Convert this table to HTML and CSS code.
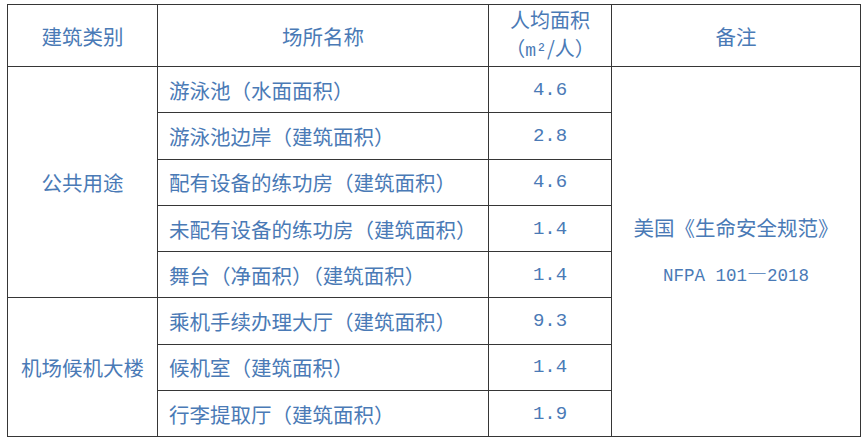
FILE: index.html
```html
<!DOCTYPE html>
<html lang="zh-CN">
<head>
<meta charset="utf-8">
<title>人均面积</title>
<link rel="stylesheet" href="styles.css">
</head>
<body>
<table class="area-table">
  <colgroup>
    <col class="c-type">
    <col class="c-name">
    <col class="c-val">
    <col class="c-note">
  </colgroup>
  <thead>
    <tr class="head-row">
      <th>建筑类别</th>
      <th>场所名称</th>
      <th class="two-line"><span class="hl">人均面积</span><span class="hl">（<span class="unit">m²</span>/人）</span></th>
      <th>备注</th>
    </tr>
  </thead>
  <tbody>
    <tr>
      <td rowspan="5" class="type">公共用途</td>
      <td class="name">游泳池（水面面积）</td>
      <td class="val">4.6</td>
      <td rowspan="8" class="note">美国《生命安全规范》<br><span class="code">NFPA 101<span class="dash">—</span>2018</span></td>
    </tr>
    <tr>
      <td class="name">游泳池边岸（建筑面积）</td>
      <td class="val">2.8</td>
    </tr>
    <tr>
      <td class="name">配有设备的练功房（建筑面积）</td>
      <td class="val">4.6</td>
    </tr>
    <tr>
      <td class="name">未配有设备的练功房（建筑面积）</td>
      <td class="val">1.4</td>
    </tr>
    <tr>
      <td class="name">舞台（净面积）（建筑面积）</td>
      <td class="val">1.4</td>
    </tr>
    <tr>
      <td rowspan="3" class="type">机场候机大楼</td>
      <td class="name">乘机手续办理大厅（建筑面积）</td>
      <td class="val">9.3</td>
    </tr>
    <tr>
      <td class="name">候机室（建筑面积）</td>
      <td class="val">1.4</td>
    </tr>
    <tr>
      <td class="name">行李提取厅（建筑面积）</td>
      <td class="val">1.9</td>
    </tr>
  </tbody>
</table>
</body>
</html>
```

FILE: styles.css
```css
html, body {
  margin: 0;
  padding: 0;
  background: #ffffff;
}

body {
  padding: 4px 0 0 7px;
  font-family: "Noto Sans CJK SC", "Noto Sans", sans-serif;
  color: #4a7ab6;
}

.area-table {
  border-collapse: collapse;
  table-layout: fixed;
  width: 853px;
  font-size: 20.5px;
  font-weight: 400;
}

.c-type { width: 150px; }
.c-name { width: 331px; }
.c-val { width: 123px; }
.c-note { width: 249px; }

.area-table th,
.area-table td {
  border: 1px solid #363636;
  padding: 0;
  text-align: center;
  vertical-align: middle;
  font-weight: 400;
  line-height: 26px;
}

.head-row th {
  height: 61px;
}

.area-table th.two-line {
  font-size: 20px;
}

.hl {
  display: block;
  line-height: 28px;
}

.area-table tbody td {
  height: 45.3px;
}

.area-table td.name {
  text-align: left;
  padding-left: 11px;
  white-space: nowrap;
}

.area-table td.val {
  font-family: "Liberation Mono", monospace;
  font-size: 19px;
}

.unit {
  font-family: "Liberation Mono", monospace;
  font-size: 18px;
}

.area-table td.note {
  line-height: 45px;
}

.code {
  font-family: "Liberation Mono", monospace;
  font-size: 17.5px;
}

.dash {
  font-family: "Noto Sans CJK SC", sans-serif;
  font-size: 20px;
}
```
